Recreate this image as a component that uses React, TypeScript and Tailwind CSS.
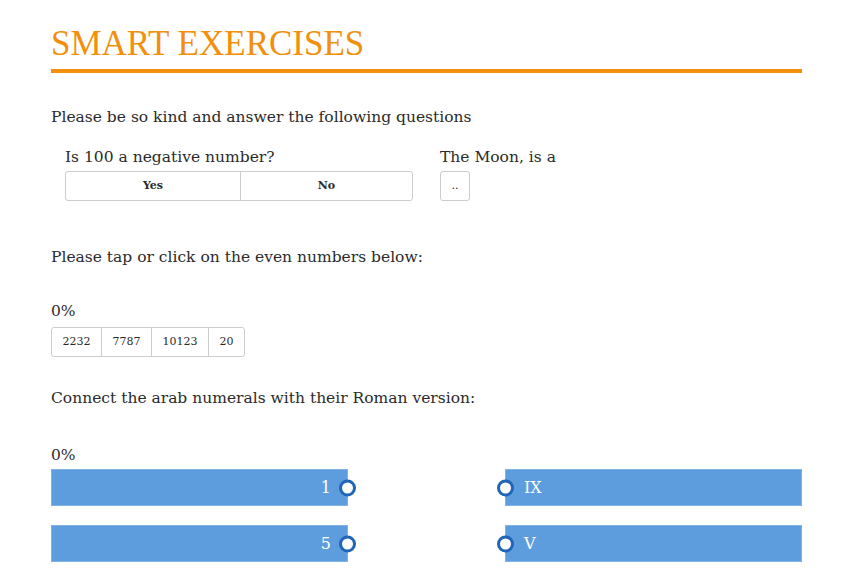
import React from 'react';

const serif = { fontFamily: '"DejaVu Serif", Georgia, serif' };

const Connector: React.FC<{ side: 'left' | 'right' }> = ({ side }) => (
    <span className={`absolute top-1/2 -translate-y-1/2 w-[17px] h-[17px] rounded-full bg-white border-[3px] border-[#1f66b8] ${side === 'right' ? 'right-[-9px]' : 'left-[-9px]'}`} />
);

const App: React.FC = () => {
    const evens = ['2232', '7787', '10123', '20'];
    const pairs = [{ l: '1', r: 'IX' }, { l: '5', r: 'V' }];

    return (
        <div className="min-h-screen bg-white text-[#2b2b2b]" style={serif}>
            <div className="w-[751px] ml-[51px] pt-[24px]">
                <h1 className="text-[35px] leading-[40px] text-[#f28f0c]" style={{ fontFamily: '"Liberation Serif", serif' }}>SMART EXERCISES</h1>
                <div className="h-[4px] bg-[#f28f0c] mt-[5px]" />

                <p className="text-[15.5px] mt-[33px] leading-[22px]">Please be so kind and answer the following questions</p>

                <div className="flex gap-[27px] pl-[14px] mt-[18px]">
                    <div className="w-[348px]">
                        <p className="text-[15.5px] leading-[22px]">Is 100 a negative number?</p>
                        <div className="flex h-[30px] mt-[3px] border border-[#ccc] rounded-[3px] text-[11px] font-semibold">
                            <button className="w-[175px] border-r border-[#ccc] pt-[1px]">Yes</button>
                            <button className="flex-1 pt-[1px]">No</button>
                        </div>
                    </div>
                    <div>
                        <p className="text-[15.5px] leading-[22px]">The Moon, is a</p>
                        <button className="w-[30px] h-[30px] mt-[3px] border border-[#ccc] rounded-[3px] text-[11px]">..</button>
                    </div>
                </div>

                <p className="text-[15.5px] leading-[22px] mt-[45px]">Please tap or click on the even numbers below:</p>

                <p className="text-[15.5px] leading-[22px] mt-[32px]">0%</p>
                <div className="inline-flex h-[30px] border border-[#ccc] rounded-[3px] text-[11px] mt-[5px]">
                    {evens.map((n, i) => (
                        <button key={n} className={`px-[10.5px] ${i > 0 ? 'border-l border-[#ccc]' : ''}`}>{n}</button>
                    ))}
                </div>

                <p className="text-[15.5px] leading-[22px] mt-[30px]">Connect the arab numerals with their Roman version:</p>

                <p className="text-[15.5px] leading-[22px] mt-[35px]">0%</p>
                <div className="flex flex-col gap-[19px] mt-[3px]">
                    {pairs.map(p => (
                        <div key={p.l} className="flex justify-between">
                            <div className="relative w-[297px] h-[37px] bg-[#5e9ddd] border border-[#7fb2e6] flex items-center justify-end pr-[16px] text-white text-[16px]">
                                {p.l}
                                <Connector side="right" />
                            </div>
                            <div className="relative w-[297px] h-[37px] bg-[#5e9ddd] border border-[#7fb2e6] flex items-center pl-[18px] text-white text-[16px]">
                                {p.r}
                                <Connector side="left" />
                            </div>
                        </div>
                    ))}
                </div>
            </div>
        </div>
    );
};

export default App;
